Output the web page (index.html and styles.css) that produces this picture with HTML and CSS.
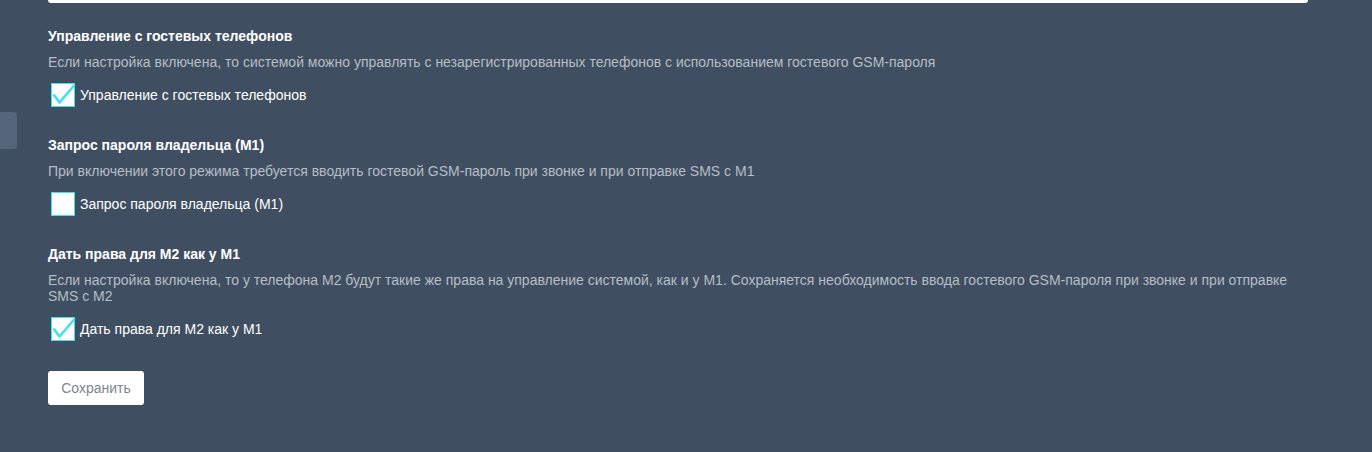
FILE: index.html
```html
<!DOCTYPE html>
<html lang="ru">
<head>
<meta charset="utf-8">
<title>Настройки</title>
<link rel="stylesheet" href="styles.css">
</head>
<body>
<div class="side-tab"></div>
<div class="page">
  <div class="top-field"></div>

  <section class="setting">
    <h3 class="setting-title">Управление с гостевых телефонов</h3>
    <p class="setting-desc">Если настройка включена, то системой можно управлять с незарегистрированных телефонов с использованием гостевого GSM-пароля</p>
    <label class="check">
      <span class="box checked"><svg viewBox="0 0 24 24" width="24" height="24"><path d="M2.5 11.5 L8.5 19.5 L23.5 2"/></svg></span>
      <span class="check-label">Управление с гостевых телефонов</span>
    </label>
  </section>

  <section class="setting">
    <h3 class="setting-title">Запрос пароля владельца (M1)</h3>
    <p class="setting-desc">При включении этого режима требуется вводить гостевой GSM-пароль при звонке и при отправке SMS с M1</p>
    <label class="check">
      <span class="box"></span>
      <span class="check-label">Запрос пароля владельца (M1)</span>
    </label>
  </section>

  <section class="setting">
    <h3 class="setting-title">Дать права для M2 как у M1</h3>
    <p class="setting-desc">Если настройка включена, то у телефона M2 будут такие же права на управление системой, как и у M1. Сохраняется необходимость ввода гостевого GSM-пароля при звонке и при отправке SMS с M2</p>
    <label class="check">
      <span class="box checked"><svg viewBox="0 0 24 24" width="24" height="24"><path d="M2.5 11.5 L8.5 19.5 L23.5 2"/></svg></span>
      <span class="check-label">Дать права для M2 как у M1</span>
    </label>
  </section>

  <button class="save-btn" type="button">Сохранить</button>
</div>
</body>
</html>
```
FILE: styles.css
```css
html, body {
  margin: 0;
  padding: 0;
  background: #3f4f61;
  height: 100%;
}
body {
  font-family: "Liberation Sans", Arial, sans-serif;
  font-size: 14px;
  line-height: 16px;
  color: #ffffff;
  overflow: hidden;
}
.side-tab {
  position: absolute;
  left: 0;
  top: 112px;
  width: 17px;
  height: 37px;
  background: #56667a;
  border-radius: 0 4px 4px 0;
}
.page {
  padding: 0 64px 0 48px;
  display: flex;
  flex-direction: column;
  align-items: flex-start;
}
.top-field {
  align-self: stretch;
  height: 3px;
  background: #ffffff;
  border-radius: 0 0 4px 4px;
  margin-bottom: 25px;
}
.setting {
  display: flex;
  flex-direction: column;
  align-items: flex-start;
  margin-bottom: 30px;
}
.setting-title {
  margin: 0;
  font-size: 14px;
  line-height: 16px;
  font-weight: bold;
  color: #ffffff;
}
.setting-desc {
  margin: 10px 0 13px;
  color: #b6bdc5;
}
.check {
  display: flex;
  align-items: center;
  gap: 5px;
  padding-left: 3px;
  cursor: pointer;
}
.box {
  width: 24px;
  height: 24px;
  box-sizing: border-box;
  background: #ffffff;
  border: 1.5px solid #3fe2ec;
  position: relative;
}
.box svg {
  position: absolute;
  left: -1.5px;
  top: -1.5px;
  overflow: visible;
}
.box svg path {
  fill: none;
  stroke: #3fe2ec;
  stroke-width: 2.6;
  stroke-linejoin: miter;
}
.check-label {
  color: #ffffff;
  font-size: 14px;
}
.save-btn {
  width: 96px;
  height: 34px;
  background: #ffffff;
  border: none;
  border-radius: 3px;
  font-family: "Liberation Sans", Arial, sans-serif;
  font-size: 14px;
  color: #80858c;
  padding: 0;
  cursor: pointer;
}
```
